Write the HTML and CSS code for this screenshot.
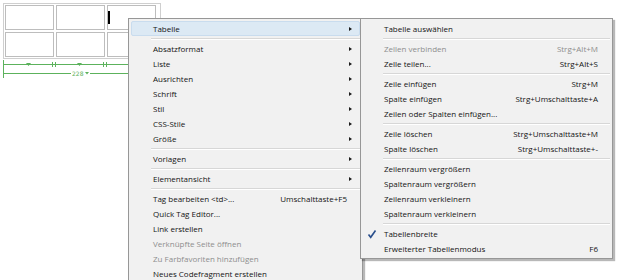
FILE: index.html
```html
<!DOCTYPE html>
<html>
<head>
<meta charset="utf-8">
<title>Tabelle Kontextmenü</title>
<link rel="stylesheet" href="styles.css">
</head>
<body>

<div class="doc">
  <div class="tbl">
    <div class="cell"></div>
    <div class="cell"></div>
    <div class="cell"><span class="caret"></span></div>
    <div class="cell"></div>
    <div class="cell"></div>
    <div class="cell"></div>
  </div>
  <svg class="ruler" width="160" height="22" viewBox="0 0 160 22">
    <g stroke="#5cb25c" stroke-width="1" fill="none">
      <line x1="3.5" y1="1" x2="3.5" y2="19"/>
      <line x1="4" y1="5.5" x2="160" y2="5.5"/>
      <line x1="52.5" y1="3" x2="52.5" y2="8"/>
      <line x1="55.5" y1="3" x2="55.5" y2="8"/>
      <line x1="103.5" y1="3" x2="103.5" y2="8"/>
      <line x1="106.5" y1="3" x2="106.5" y2="8"/>
      <line x1="4" y1="14.5" x2="71" y2="14.5"/>
      <line x1="90" y1="14.5" x2="160" y2="14.5"/>
    </g>
    <g fill="#5cb25c">
      <path d="M26 4h5l-2.5 3z"/>
      <path d="M77 4h5l-2.5 3z"/>
      <path d="M85 13h4l-2 2.5z"/>
    </g>
    <text x="72" y="17" class="dim">228</text>
  </svg>
</div>

<div class="menu main">
  <div class="item hot"><span class="label">Tabelle</span><span class="arrow"></span></div>
  <div class="sep"></div>
  <div class="item"><span class="label">Absatzformat</span><span class="arrow"></span></div>
  <div class="item"><span class="label">Liste</span><span class="arrow"></span></div>
  <div class="item"><span class="label">Ausrichten</span><span class="arrow"></span></div>
  <div class="item"><span class="label">Schrift</span><span class="arrow"></span></div>
  <div class="item"><span class="label">Stil</span><span class="arrow"></span></div>
  <div class="item"><span class="label">CSS-Stile</span><span class="arrow"></span></div>
  <div class="item"><span class="label">Größe</span><span class="arrow"></span></div>
  <div class="sep"></div>
  <div class="item"><span class="label">Vorlagen</span><span class="arrow"></span></div>
  <div class="sep"></div>
  <div class="item"><span class="label">Elementansicht</span><span class="arrow"></span></div>
  <div class="sep"></div>
  <div class="item"><span class="label">Tag bearbeiten &lt;td&gt;...</span><span class="key">Umschalttaste+F5</span></div>
  <div class="item"><span class="label">Quick Tag Editor...</span></div>
  <div class="item"><span class="label">Link erstellen</span></div>
  <div class="item off"><span class="label">Verknüpfte Seite öffnen</span></div>
  <div class="item off"><span class="label">Zu Farbfavoriten hinzufügen</span></div>
  <div class="item"><span class="label">Neues Codefragment erstellen</span></div>
</div>

<div class="menu sub">
  <div class="item"><span class="label">Tabelle auswählen</span></div>
  <div class="sep"></div>
  <div class="item off"><span class="label">Zellen verbinden</span><span class="key">Strg+Alt+M</span></div>
  <div class="item"><span class="label">Zelle teilen...</span><span class="key">Strg+Alt+S</span></div>
  <div class="sep"></div>
  <div class="item"><span class="label">Zeile einfügen</span><span class="key">Strg+M</span></div>
  <div class="item"><span class="label">Spalte einfügen</span><span class="key">Strg+Umschalttaste+A</span></div>
  <div class="item"><span class="label">Zeilen oder Spalten einfügen...</span></div>
  <div class="sep"></div>
  <div class="item"><span class="label">Zeile löschen</span><span class="key">Strg+Umschalttaste+M</span></div>
  <div class="item"><span class="label">Spalte löschen</span><span class="key">Strg+Umschalttaste+-</span></div>
  <div class="sep"></div>
  <div class="item"><span class="label">Zeilenraum vergrößern</span></div>
  <div class="item"><span class="label">Spaltenraum vergrößern</span></div>
  <div class="item"><span class="label">Zeilenraum verkleinern</span></div>
  <div class="item"><span class="label">Spaltenraum verkleinern</span></div>
  <div class="sep"></div>
  <div class="item">
    <svg class="check" width="10" height="10" viewBox="0 0 10 10"><path d="M1.5 5.5l2.2 2.8L8.5 1.5" fill="none" stroke="#2a4f8c" stroke-width="1.6"/></svg>
    <span class="label">Tabellenbreite</span>
  </div>
  <div class="item"><span class="label">Erweiterter Tabellenmodus</span><span class="key">F6</span></div>
</div>

</body>
</html>
```

FILE: styles.css
```css
html, body {
  margin: 0;
  padding: 0;
  background: #ffffff;
  overflow: hidden;
}

body {
  width: 627px;
  height: 280px;
  position: relative;
  font-family: "Open Sans", "Noto Sans", sans-serif;
  font-size: 8px;
  color: #141414;
}

/* document behind the menu */
.doc {
  padding: 3px 0 0 0;
}

.tbl {
  margin-left: 3px;
  width: 154px;
  display: grid;
  grid-template-columns: 49px 49px 49px;
  grid-auto-rows: 25px;
  gap: 2px;
  padding: 1px;
  border: 1px solid #cfcfcf;
}

.cell {
  border: 1px solid #bdbdbd;
  position: relative;
}

.caret {
  position: absolute;
  left: 0;
  top: 5px;
  width: 2px;
  height: 13px;
  background: #000;
}

.ruler {
  display: block;
}

.dim {
  font-family: "DejaVu Sans", sans-serif;
  font-size: 6px;
  fill: #5cb25c;
}

/* context menus */
.menu {
  position: absolute;
  top: 18px;
  background: #f1f1f1;
  border: 1px solid #979797;
  box-shadow: 2px 2px 1px rgba(0, 0, 0, 0.28);
  padding: 2px 2px;
  box-sizing: border-box;
}

.main {
  left: 128px;
  width: 235px;
  height: 290px;
}

.sub {
  left: 360px;
  width: 253px;
  z-index: 2;
}

.item {
  height: 15px;
  display: flex;
  align-items: center;
  position: relative;
  border: 1px solid transparent;
  border-radius: 2px;
  box-sizing: border-box;
}

.main .item { padding: 0 7px 0 21px; }
.sub .item { padding: 0 11px 0 20px; }

.item.hot {
  background: #dce9f4;
  border-color: #c9dcee;
}

.item.off { color: #8e8e8e; }

.label {
  flex: 1;
  white-space: nowrap;
}

.key {
  white-space: nowrap;
}

.main .key { margin-right: 5px; }

.arrow {
  width: 0;
  height: 0;
  border-top: 2.5px solid transparent;
  border-bottom: 2.5px solid transparent;
  border-left: 3px solid #1b1b1b;
}

.check {
  position: absolute;
  left: 3px;
  top: 2px;
}

.sep {
  height: 5px;
  position: relative;
}

.sep::after {
  content: "";
  position: absolute;
  left: 20px;
  right: 0;
  top: 2px;
  height: 1px;
  background: #d7d7d7;
  border-bottom: 1px solid #ffffff;
}
```
